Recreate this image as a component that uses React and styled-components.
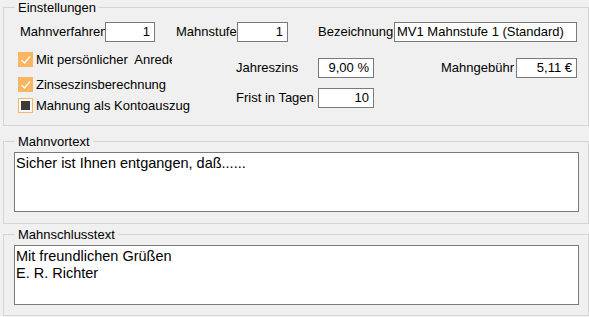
import React from "react";
import styled, { createGlobalStyle } from "styled-components";

const GlobalStyle = createGlobalStyle`
  html, body {
    margin: 0;
    padding: 0;
    background: #f0f0f0;
  }
  body {
    font-family: "Liberation Sans", Arial, sans-serif;
    font-size: 13px;
    color: #000;
  }
`;

const Page = styled.div`
  width: 589px;
  height: 317px;
  padding-left: 3px;
  box-sizing: border-box;
  overflow: hidden;
`;

const Group = styled.fieldset`
  box-sizing: border-box;
  width: 586px;
  height: ${(p) => p.$height}px;
  margin: ${(p) => p.$top || 0}px 0 0 0;
  padding: 0;
  border: 1px solid #d5d5d5;
  min-width: 0;
`;

const Legend = styled.legend`
  margin-left: 11px;
  padding: 0 3px;
  font-size: 13px;
  line-height: 15px;
  color: #000;
`;

const Body = styled.div`
  padding: 7px 0 0 14px;
`;

const Row = styled.div`
  display: flex;
  align-items: center;
  height: 20px;
`;

const Label = styled.span`
  display: block;
  width: ${(p) => p.$width}px;
  margin-left: ${(p) => p.$gap || 0}px;
  overflow: hidden;
  white-space: pre;
  line-height: 20px;
`;

const Field = styled.div`
  box-sizing: border-box;
  width: ${(p) => p.$width}px;
  height: 20px;
  border: 1px solid #7a7a7a;
  background: #fff;
  padding: 0 ${(p) => (p.$left ? 0 : 4)}px 0 ${(p) => (p.$left ? 2 : 0)}px;
  text-align: ${(p) => (p.$left ? "left" : "right")};
  line-height: 18px;
  font-size: 13px;
  white-space: nowrap;
  overflow: hidden;
`;

const Lower = styled.div`
  display: flex;
  margin-top: 10px;
`;

const CheckColumn = styled.div`
  display: flex;
  flex-direction: column;
  width: 218px;
`;

const CheckRow = styled.div`
  display: flex;
  align-items: center;
  height: 15px;
  margin-top: ${(p) => p.$top || 0}px;
`;

const Box = styled.span`
  box-sizing: border-box;
  display: flex;
  align-items: center;
  justify-content: center;
  width: 15px;
  height: 15px;
  flex: none;
  background: ${(p) => (p.$checked ? "#f9b661" : "#f7f7f7")};
  border: 1px solid #f9b661;
`;

const Square = styled.span`
  width: 9px;
  height: 9px;
  background: #3a3a3a;
`;

const CheckText = styled.span`
  display: block;
  width: ${(p) => p.$width}px;
  margin-left: 3px;
  white-space: pre;
  overflow: hidden;
  line-height: 15px;
`;

const FieldColumn = styled.div`
  display: flex;
  flex-direction: column;
  gap: 10px;
  padding-top: 6px;
  margin-left: ${(p) => p.$gap || 0}px;
`;

const TextBody = styled.div`
  padding: 3px 0 0 10px;
`;

const TextArea = styled.textarea`
  display: block;
  box-sizing: border-box;
  width: 565px;
  height: 60px;
  margin: 0;
  padding: 2px 1px 1px;
  border: 1px solid #7a7a7a;
  border-radius: 0;
  background: #fff;
  font-family: "Liberation Sans", Arial, sans-serif;
  font-size: 14.5px;
  line-height: 17px;
  color: #000;
  resize: none;
  overflow: hidden;
  outline: none;
`;

function Check({ state, children, width, top }) {
  return (
    <CheckRow $top={top}>
      <Box $checked={state === "checked"}>
        {state === "checked" ? (
          <svg width="13" height="13" viewBox="0 0 13 13">
            <path d="M2.5 7 L5.5 10 L11 3.5" fill="none" stroke="#fff" strokeWidth="1.3" />
          </svg>
        ) : (
          <Square />
        )}
      </Box>
      <CheckText $width={width}>{children}</CheckText>
    </CheckRow>
  );
}

export default function App() {
  return (
    <Page>
      <GlobalStyle />
      <Group $height={126}>
        <Legend>Einstellungen</Legend>
        <Body>
          <Row>
            <Label $width={85} $gap={2}>Mahnverfahren</Label>
            <Field $width={50}>1</Field>
            <Label $width={61} $gap={21}>Mahnstufe</Label>
            <Field $width={51}>1</Field>
            <Label $width={76} $gap={30}>Bezeichnung</Label>
            <Field $width={183} $left>MV1 Mahnstufe 1 (Standard)</Field>
          </Row>
          <Lower>
            <CheckColumn>
              <Check state="checked" width={136}>Mit persönlicher  Anrede</Check>
              <Check state="checked" width={170} top={10}>Zinseszinsberechnung</Check>
              <Check state="mixed" width={170} top={6}>Mahnung als Kontoauszug</Check>
            </CheckColumn>
            <FieldColumn>
              <Row>
                <Label $width={82}>Jahreszins</Label>
                <Field $width={56}>9,00 %</Field>
              </Row>
              <Row>
                <Label $width={82}>Frist in Tagen</Label>
                <Field $width={56}>10</Field>
              </Row>
            </FieldColumn>
            <FieldColumn $gap={67}>
              <Row>
                <Label $width={75}>Mahngebühr</Label>
                <Field $width={61}>5,11 €</Field>
              </Row>
            </FieldColumn>
          </Lower>
        </Body>
      </Group>
      <Group $height={90} $top={8}>
        <Legend>Mahnvortext</Legend>
        <TextBody>
          <TextArea readOnly value="Sicher ist Ihnen entgangen, daß......" />
        </TextBody>
      </Group>
      <Group $height={89} $top={3}>
        <Legend>Mahnschlusstext</Legend>
        <TextBody>
          <TextArea readOnly value={"Mit freundlichen Grüßen\nE. R. Richter"} />
        </TextBody>
      </Group>
    </Page>
  );
}
